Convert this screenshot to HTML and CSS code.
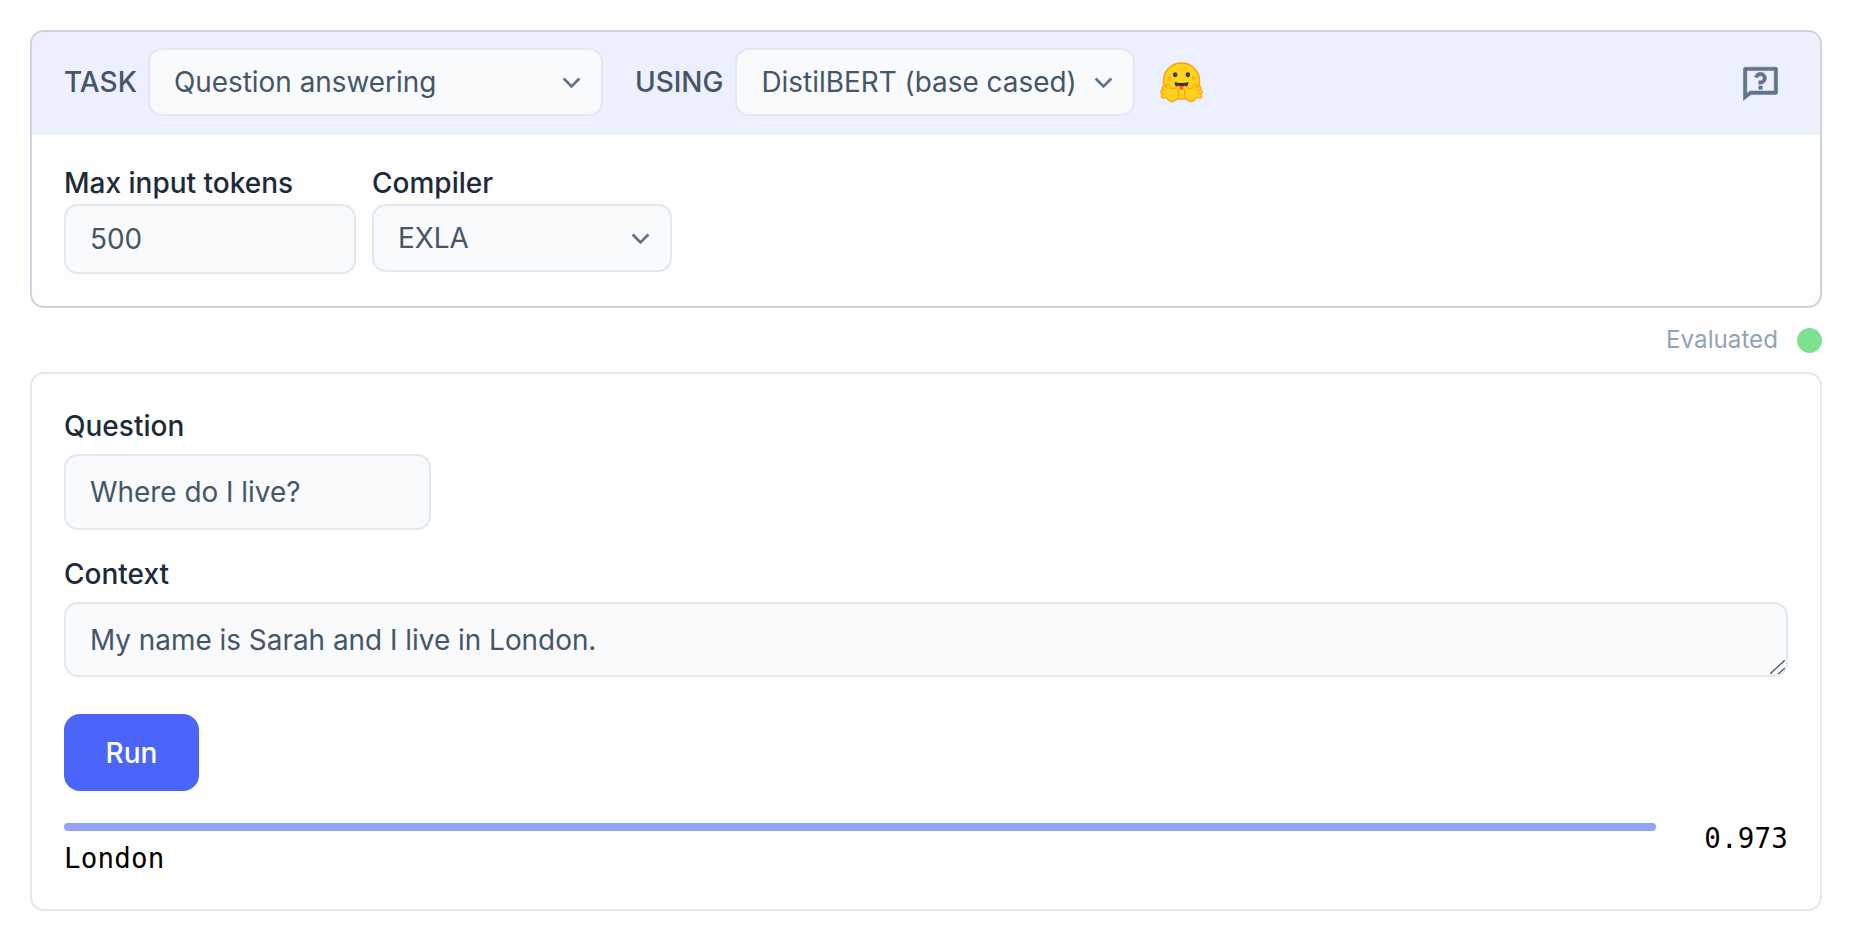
FILE: index.html
```html
<!DOCTYPE html>
<html lang="en">
<head>
<meta charset="utf-8">
<title>Smart cell</title>
<link rel="stylesheet" href="styles.css">
</head>
<body>
<main class="page">
  <section class="config">
    <header class="config-head">
      <span class="head-label head-task">TASK</span>
      <div class="select select-task"><span>Question answering</span>
        <svg class="chev" viewBox="0 0 24 24"><path d="M5 8.500l7 7 7-7"/></svg></div>
      <span class="head-label head-using">USING</span>
      <div class="select select-model"><span>DistilBERT (base cased)</span>
        <svg class="chev" viewBox="0 0 24 24"><path d="M5 8.500l7 7 7-7"/></svg></div>
      <svg class="hug" viewBox="0 0 44 44">
        <defs>
          <g id="hand-shape">
            <path d="M12 34L3 36M12 34L2.500 31.500M12 34L4 27.500M12 34L8 25.500M12 34L18.500 27.500M12 34L12 40" fill="none" stroke-linecap="round"/>
          </g>
          <g id="hand">
            <g stroke="#ff9d0b" stroke-width="4.800"><use href="#hand-shape"/></g>
            <circle cx="12.500" cy="34.500" r="7.200" fill="#ff9d0b"/>
            <g stroke="#ffd21e" stroke-width="2.800"><use href="#hand-shape"/></g>
            <circle cx="12.500" cy="34.500" r="6" fill="#ffd21e"/>
          </g>
        </defs>
        <circle cx="22" cy="20.500" r="18.500" fill="#ffd21e" stroke="#ff9d0b" stroke-width="1.400"/>
        <ellipse cx="15.500" cy="14" rx="2.300" ry="2.500" fill="#3a3b45"/>
        <ellipse cx="28.500" cy="14" rx="2.300" ry="2.500" fill="#3a3b45"/>
        <circle cx="9.500" cy="17.500" r="1.800" fill="#ffad03"/>
        <circle cx="34.500" cy="17.500" r="1.800" fill="#ffad03"/>
        <path d="M15 21.500c4 1.300 10 1.300 14 0c0 4.500-3 7.500-7 7.500s-7-3-7-7.500z" fill="#32343d"/>
        <path d="M18 26.500c1.500-1.500 6.500-1.500 8 0c-1 1.800-2.500 2.500-4 2.500s-3-.7-4-2.500z" fill="#ef4e4e"/>
        <use href="#hand"/>
        <use href="#hand" transform="matrix(-1 0 0 1 44 0)"/>
      </svg>
      <svg class="help" viewBox="0 0 24 24"><path d="M5.763 17H20V5H4v13.385L5.763 17zm.692 2L2 22.500V4a1 1 0 0 1 1-1h18a1 1 0 0 1 1 1v14a1 1 0 0 1-1 1H6.455zM11 14h2v2h-2v-2zM8.567 8.813A3.501 3.501 0 1 1 12 13h-1v-2h1a1.500 1.500 0 1 0-1.471-1.794l-1.962-.393z"/></svg>
    </header>
    <div class="config-body">
      <div class="field field-tokens">
        <div class="label">Max input tokens</div>
        <div class="input input-tokens">500</div>
      </div>
      <div class="field field-compiler">
        <div class="label">Compiler</div>
        <div class="select select-compiler"><span>EXLA</span>
          <svg class="chev" viewBox="0 0 24 24"><path d="M5 8.500l7 7 7-7"/></svg></div>
      </div>
    </div>
  </section>
  <div class="status"><span class="status-text">Evaluated</span><span class="status-dot"></span></div>
  <section class="output">
    <div class="label">Question</div>
    <div class="input input-question">Where do I live?</div>
    <div class="label label-context">Context</div>
    <div class="context-wrap">
      <textarea class="context" rows="1">My name is Sarah and I live in London.</textarea>
      <svg class="grip" viewBox="0 0 15 14"><path d="M15 0L0 14M15 8L8 14"/></svg>
    </div>
    <button class="run">Run</button>
    <div class="result">
      <div class="result-main">
        <div class="bar"></div>
        <div class="answer">London</div>
      </div>
      <div class="score">0.973</div>
    </div>
  </section>
</main>
</body>
</html>
```
FILE: styles.css
```css
* { box-sizing: border-box; }
html, body { margin: 0; background: #fff; }
body { font-family: Inter, "Noto Sans", sans-serif; color: #445668; }
.page { padding: 30px 30px 0 30px; }

.config { border: 2px solid #cad5e0; border-radius: 14px; background: #fdfdfd; overflow: hidden; }
.config-head { display: flex; align-items: center; height: 102px; padding: 0 32px 1px; background: #ecf0ff; border-bottom: 1px solid #e1e8f0; }
.head-label { font-size: 28px; font-weight: 500; color: #445668; margin-right: 12px; }
.head-task { margin-right: 11px; }
.head-using { margin-left: 32px; }

.select { display: flex; align-items: center; justify-content: space-between; background: #f8fafc; border: 2px solid #e1e8f0; border-radius: 14px; font-size: 27.900px; color: #445668; padding: 0 16px 0 24px; }
.select-task { width: 455px; height: 68px; }
.select-model { width: 400px; height: 68px; }
.select-compiler { width: 300px; height: 68px; }
.chev { width: 27px; height: 27px; fill: none; stroke: #61758a; stroke-width: 2.400; flex: none; }
.hug { width: 43px; height: 43px; margin-left: 25px; }
.help { width: 41px; height: 41px; margin-left: auto; margin-right: 7px; fill: #61758a; stroke: #61758a; stroke-width: 0.300; }

.config-body { display: flex; gap: 16px; padding: 30px 32px 32px; }
.label { font-size: 28px; font-weight: 500; color: #1c2a3a; line-height: 40px; }
.field .label { line-height: 38px; padding-bottom: 2px; }
.field-tokens { width: 292px; }
.input { display: flex; align-items: center; background: #f8fafc; border: 2px solid #e1e8f0; border-radius: 14px; font-size: 27.900px; color: #445668; padding: 0 24px; }
.input-tokens { height: 70px; }

.status { display: flex; align-items: center; justify-content: flex-end; gap: 19px; height: 64px; }
.status-text { font-size: 24.200px; color: #91a4b7; padding-bottom: 2px; }
.status-dot { width: 25px; height: 25px; border-radius: 50%; background: #7de28f; }

.output { border: 2px solid #e1e8f0; border-radius: 14px; padding: 32px; height: 539px; }
.input-question { width: 367px; height: 76px; margin-top: 8px; }
.label-context { margin-top: 24px; }
.context-wrap { position: relative; margin-top: 8px; }
.context { display: block; width: 100%; height: 75px; padding: 19px 24px 17px; background: #f8fafc; border: 2px solid #e1e8f0; border-radius: 14px; font: 27.900px Inter, sans-serif; color: #445668; outline: none; resize: none; }
.grip { position: absolute; right: 3px; bottom: 3px; width: 15px; height: 14px; fill: none; stroke: #555; stroke-width: 1.300; }
.run { display: block; margin-top: 37px; width: 135px; height: 77px; background: #4a65f8; color: #fff; border: 0; border-radius: 16px; font: 500 28px Inter, sans-serif; }
.result { display: flex; justify-content: space-between; margin-top: 32px; }
.result-main { width: 1592px; }
.bar { height: 8px; border-radius: 4px; background: #91a2f8; }
.answer, .score { font-family: "DejaVu Sans Mono", "Liberation Mono", monospace; font-size: 27.500px; color: #000; }
.answer { margin-top: 9px; line-height: 36px; letter-spacing: 0.2px; }
.score { margin-top: -3px; line-height: 36px; letter-spacing: 0.2px; }
```
